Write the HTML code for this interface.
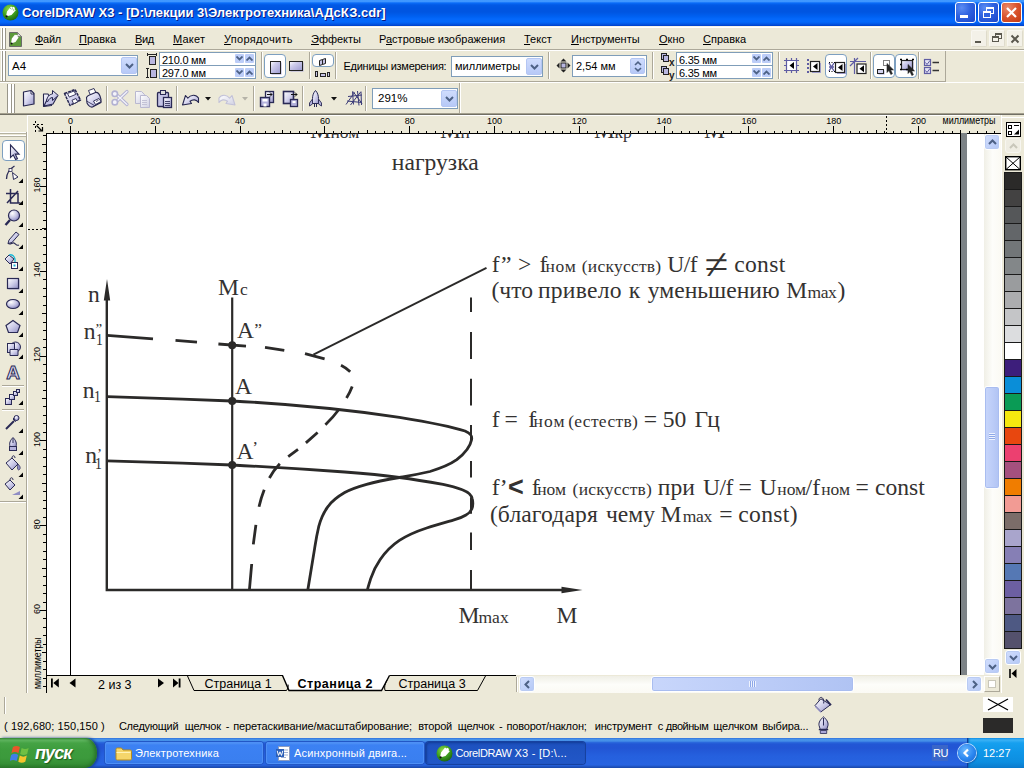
<!DOCTYPE html>
<html lang="ru">
<head>
<meta charset="utf-8">
<title>CorelDRAW X3 - [D:\лекции 3\Электротехника\АДсКЗ.cdr]</title>
<style>
*{box-sizing:border-box;margin:0;padding:0}
html,body{width:1024px;height:768px;overflow:hidden;background:#ece9d8}
body{position:relative;font-family:"Liberation Sans","DejaVu Sans",sans-serif;font-size:11px;color:#000}
.abs{position:absolute}
.t{position:absolute;white-space:nowrap;line-height:1}
#titlebar{left:0;top:0;width:1024px;height:26px;background:linear-gradient(#4098ff 0,#3f96ff 1.500px,#0a6cf8 3px,#0259e5 5px,#0055e1 8px,#0055e1 12px,#0062f3 17px,#0468fb 19px,#0468fb 22px,#0358e6 24px,#003fc8 26px)}
#menubar{left:0;top:26px;width:1024px;height:24px;background:#ece9d8}
#propbar{left:0;top:50px;width:1024px;height:32px;background:#ece9d8}
#toolbar{left:0;top:82px;width:1024px;height:32px;background:#ece9d8}
#toolbox{left:0;top:114px;width:28px;height:579px;background:#ece9d8}
#hruler{left:28px;top:115px;width:972px;height:18px;background:#ece9d8;border-top:1px solid #fff}
#vruler{left:28px;top:133px;width:18px;height:560px;background:#ece9d8}
#canvas{left:46px;top:133px;width:938px;height:542px;background:#fff;overflow:hidden}
#vscroll{left:984px;top:133px;width:17px;height:542px;background:#f3f1e7}
#palette{left:1001px;top:114px;width:23px;height:579px;background:#ece9d8}
#pagetabs{left:46px;top:675px;width:938px;height:18px;background:#ece9d8}
#status{left:0;top:693px;width:1024px;height:45px;background:#ece9d8}
#taskbar{left:0;top:738px;width:1024px;height:30px;background:linear-gradient(#2a66d8 0,#4691e9 1px,#4590e8 3px,#2a68dc 4.500px,#2257d5 6px,#2255d4 10px,#2560de 18px,#2763e0 27px,#1d4fb8 29px,#1a47a8 30px)}

#titlebar .ttl{left:22px;top:6px;font-size:13px;font-weight:bold;color:#fff;text-shadow:1px 1px 0 #0a1883;letter-spacing:0}
.cbtn{position:absolute;top:2px;width:21px;height:21px;border:1px solid #fff;border-radius:3px;background:radial-gradient(circle at 30% 25%,#5b8cf3 0,#2e62e0 45%,#1c46c9 100%)}
.cbtn.x{background:radial-gradient(circle at 30% 25%,#ea8a6c 0,#d9532c 50%,#c23a12 100%)}
.mi{position:absolute;top:7px;font-size:11px;line-height:13px;white-space:nowrap}
.mi u{text-decoration:underline;text-underline-offset:1px}
.mdib{position:absolute;top:4px;width:16px;height:17px;background:#f3f1e8;border:1px solid #f8f7f1;border-right-color:#dedbcb;border-bottom-color:#dedbcb;border-radius:2px}
.grip{position:absolute;width:5px;background:linear-gradient(90deg,#fff 0,#fff 1px,#99968a 1px,#99968a 2px,#fff 2px,#fff 4px,#99968a 4px,#99968a 5px)}

.sep{position:absolute;width:2px;border-left:1px solid #aca899;border-right:1px solid #fff}
.fld{position:absolute;background:#fff;border:1px solid #7f9db9}
.fld .tx{position:absolute;left:3px;font-size:11px;line-height:13px;white-space:nowrap}
.dd{position:absolute;background:linear-gradient(#cfdcfd,#b7c9f7);border:1px solid #b4c6f3;border-radius:2px}
.sp{position:absolute;width:9px;height:9px;background:#bccdf8;border-radius:1px}
.pressed{position:absolute;background:#fff;border:1px solid #7d9fc0;border-radius:4px}

.dt{position:absolute;white-space:nowrap;line-height:1;font-family:"Liberation Serif","DejaVu Serif",serif;color:#343231}

.sbtn{position:absolute;background:linear-gradient(135deg,#d2defd,#b4c8f6);border:1px solid #fff;border-radius:3px;box-shadow:inset 0 0 0 1px #b9cbf3}
.thumb{position:absolute;background:linear-gradient(90deg,#c8d6fb,#bacbf7 60%,#b0c3f3);border:1px solid #fff;border-radius:3px;box-shadow:inset 0 0 0 1px #a9bdf0}

#taskbar .tbn{position:absolute;top:4px;height:22px;border-radius:3px;background:linear-gradient(#5a9af5 0,#3c81f3 3px,#3a7ff0 18px,#2f6fe0 24px);box-shadow:inset 0 0 0 1px #4d8ff6,0 0 0 1px #2257c6;color:#fff;font-size:11px}
#taskbar .tbn.act{background:linear-gradient(#1a4db8 0,#1e52c0 4px,#2258c8 24px);box-shadow:inset 1px 1px 2px #143d9a,0 0 0 1px #16419f}
#taskbar .tbn .t{top:6px;color:#fff}
</style>
</head>
<body>
<div id="titlebar" class="abs">
<svg class="abs" style="left:2px;top:4px" width="17" height="17" viewBox="0 0 17 17"><defs><radialGradient id="cg" cx="40%" cy="30%" r="70%"><stop offset="0" stop-color="#8fdc4a"/><stop offset="0.6" stop-color="#3e9e1e"/><stop offset="1" stop-color="#1f6a10"/></radialGradient></defs><circle cx="8.5" cy="8.5" r="8" fill="url(#cg)"/><path d="M4 12.5 L5 7.5 L9 2.5 L10.5 3.5 L11.5 2.8 L13 4 L12.5 5.2 L13.8 6.2 L9.5 11 Z" fill="#fff"/><path d="M8.3 4.3l1 .8M10.3 4.6l1 .9M11.3 6l1 .8" stroke="#3e9e1e" stroke-width=".8"/><circle cx="4.6" cy="12.3" r="1.1" fill="#111"/></svg>
<div class="t ttl" id="ttl">CorelDRAW X3 - [D:\лекции 3\Электротехника\АДсКЗ.cdr]</div>
<div class="cbtn" style="left:955px"><div class="abs" style="left:4px;top:12px;width:8px;height:3px;background:#fff"></div></div>
<div class="cbtn" style="left:978px"><div class="abs" style="left:7px;top:4px;width:8px;height:7px;border:1px solid #fff;border-top-width:2px"></div><div class="abs" style="left:4px;top:8px;width:8px;height:7px;border:1px solid #fff;border-top-width:2px;background:#2e62e0"></div></div>
<div class="cbtn x" style="left:1001px"><svg class="abs" style="left:3px;top:3px" width="13" height="13" viewBox="0 0 13 13"><path d="M2 2L11 11M11 2L2 11" stroke="#fff" stroke-width="2.2"/></svg></div>
</div>
<div id="menubar" class="abs">
<div class="grip" style="left:1px;top:2px;height:21px"></div>
<svg class="abs" style="left:9px;top:4px" width="13" height="17" viewBox="0 0 13 17"><path d="M.5 2.5h8l4 4v10h-12z" fill="#5d9a3a" stroke="#6b6b6b"/><path d="M8.5 2.5v4h4z" fill="#d8d8d8" stroke="#6b6b6b" stroke-width=".6"/><path d="M2 13.5l.8-5L6 4.5l1 .8.9-.6 1 .9-.3 1 1 .8L6.5 12z" fill="#fff"/><circle cx="2.6" cy="13.6" r="1" fill="#111"/></svg>
<div class="mi" id="mi0" style="left:35px;letter-spacing:-.3px"><u>Ф</u>айл</div>
<div class="mi" id="mi1" style="left:79px"><u>П</u>равка</div>
<div class="mi" id="mi2" style="left:135px;letter-spacing:-.4px"><u>В</u>ид</div>
<div class="mi" id="mi3" style="left:173px;letter-spacing:.2px"><u>М</u>акет</div>
<div class="mi" id="mi4" style="left:224px;letter-spacing:.3px"><u>У</u>порядочить</div>
<div class="mi" id="mi5" style="left:311px"><u>Э</u>ффекты</div>
<div class="mi" id="mi6" style="left:379px">Р<u>а</u>стровые изображения</div>
<div class="mi" id="mi7" style="left:524px"><u>Т</u>екст</div>
<div class="mi" id="mi8" style="left:571px"><u>И</u>нструменты</div>
<div class="mi" id="mi9" style="left:659px"><u>О</u>кно</div>
<div class="mi" id="mi10" style="left:703px"><u>С</u>правка</div>
<div class="mdib" style="left:971px"><div class="abs" style="left:3px;top:10px;width:6px;height:2px;background:#5a584e"></div></div>
<div class="mdib" style="left:989px"><div class="abs" style="left:5px;top:2px;width:7px;height:6px;border:1px solid #5a584e;border-top-width:2px"></div><div class="abs" style="left:2px;top:5px;width:7px;height:6px;border:1px solid #5a584e;border-top-width:2px;background:#f3f1e8"></div></div>
<div class="mdib" style="left:1007px"><svg class="abs" style="left:2px;top:3px" width="10" height="10" viewBox="0 0 10 10"><path d="M1.5 1.5L8.5 8.5M8.5 1.5L1.5 8.5" stroke="#5a584e" stroke-width="2"/></svg></div>
<div class="abs" style="left:0;top:0;width:1024px;height:1px;background:#f4f3ea"></div><div class="abs" style="left:0;top:1px;width:1024px;height:1px;background:#fff"></div><div class="abs" style="left:0;top:23px;width:1024px;height:1px;background:#aca899"></div>
</div>
<div id="propbar" class="abs">
<div class="grip" style="left:1px;top:1px;height:30px"></div>
<div class="fld" style="left:8px;top:5px;width:130px;height:21px"><div class="tx" style="top:4px;font-size:11.500px">A4</div><div class="dd" style="left:112px;top:1px;width:16px;height:17px"><svg class="abs" style="left:3px;top:5px" width="9" height="6" viewBox="0 0 9 6"><path d="M1 1L4.5 4.5L8 1" fill="none" stroke="#4d6185" stroke-width="2"/></svg></div></div>
<svg class="abs" style="left:145px;top:2px" width="14" height="28" viewBox="0 0 14 28"><path d="M2.5 1v3M11.5 1v3M2.5 2.5h9" stroke="#222" fill="none"/><rect x="4.5" y="4.5" width="6" height="8" fill="#b9b7e0" stroke="#222"/><path d="M2.5 16v10M1 16.5h3M1 25.500h3" stroke="#222" fill="none"/><rect x="5.500" y="17.500" width="6" height="8" fill="#b9b7e0" stroke="#222"/></svg>
<div class="fld" style="left:159px;top:2px;width:97px;height:14px"><div class="tx" style="top:1px;left:2px;letter-spacing:-.25px">210.0 мм</div><div class="sp" style="left:75px;top:1px"><svg class="abs" style="left:1px;top:2px" width="7" height="5" viewBox="0 0 7 5"><path d="M.5 .5L3.5 3.5L6.5 .5" fill="none" stroke="#4d6185" stroke-width="1.8"/></svg></div><div class="sp" style="left:85px;top:1px"><svg class="abs" style="left:1px;top:2px" width="7" height="5" viewBox="0 0 7 5"><path d="M.5 4.5L3.5 1.5L6.5 4.5" fill="none" stroke="#4d6185" stroke-width="1.8"/></svg></div></div>
<div class="fld" style="left:159px;top:15px;width:97px;height:14px"><div class="tx" style="top:1px;left:2px;letter-spacing:-.25px">297.0 мм</div><div class="sp" style="left:75px;top:2px"><svg class="abs" style="left:1px;top:2px" width="7" height="5" viewBox="0 0 7 5"><path d="M.5 .5L3.5 3.5L6.5 .5" fill="none" stroke="#4d6185" stroke-width="1.8"/></svg></div><div class="sp" style="left:85px;top:2px"><svg class="abs" style="left:1px;top:2px" width="7" height="5" viewBox="0 0 7 5"><path d="M.5 4.5L3.5 1.5L6.5 4.5" fill="none" stroke="#4d6185" stroke-width="1.8"/></svg></div></div>
<div class="sep" style="left:261px;top:2px;height:27px"></div>
<div class="pressed" style="left:264px;top:4px;width:22px;height:24px"></div>
<svg class="abs" style="left:269px;top:8px" width="36" height="17" viewBox="0 0 36 17"><defs><linearGradient id="lg1" x1="0" y1="0" x2="1" y2="1"><stop offset="0" stop-color="#fff"/><stop offset=".35" stop-color="#cfcdec"/><stop offset="1" stop-color="#9c9ad0"/></linearGradient></defs><rect x="2.5" y="4.500" width="10" height="12" fill="#aba9d9"/><rect x="1.500" y="3.500" width="10" height="12" fill="url(#lg1)" stroke="#222"/><rect x="21.5" y="4.500" width="13" height="9" fill="#aba9d9"/><rect x="20.500" y="3.500" width="13" height="9" fill="url(#lg1)" stroke="#222"/></svg>
<div class="sep" style="left:309px;top:2px;height:27px"></div>
<div class="pressed" style="left:312px;top:4px;width:22px;height:13px"></div>
<svg class="abs" style="left:314px;top:6px" width="18" height="22" viewBox="0 0 18 22"><g fill="#c6c4e6" stroke="#222"><path d="M5.500 4.500l3-1v5l-3 1z"/><path d="M8.500 3.500l3-1v5l-3 1z"/></g><g fill="#c6c4e6" stroke="#222"><rect x="1.500" y="15.500" width="2" height="5"/><rect x="6.500" y="17.500" width="5" height="3"/><rect x="13.500" y="16.500" width="2" height="4"/></g></svg>
<div class="sep" style="left:335px;top:2px;height:27px"></div>
<div class="t" id="units" style="left:343.500px;top:10px;font-size:11px;line-height:13px;letter-spacing:-.27px">Единицы измерения:</div>
<div class="fld" style="left:451px;top:6px;width:92px;height:21px"><div class="tx" style="top:3px">миллиметры</div><div class="dd" style="left:74px;top:1px;width:16px;height:17px"><svg class="abs" style="left:3px;top:5px" width="9" height="6" viewBox="0 0 9 6"><path d="M1 1L4.5 4.5L8 1" fill="none" stroke="#4d6185" stroke-width="2"/></svg></div></div>
<div class="sep" style="left:548px;top:2px;height:27px"></div>
<svg class="abs" style="left:556px;top:8px" width="15" height="15" viewBox="0 0 15 15"><path d="M7.500 .5l3 3h-6zM7.500 14.500l3-3h-6zM.5 7.500l3-3v6zM14.500 7.500l-3-3v6z" fill="#222"/><rect x="5" y="5" width="5" height="5" fill="#b9b7e0" stroke="#222"/></svg>
<div class="fld" style="left:572px;top:5px;width:75px;height:22px"><div class="tx" style="top:4px">2,54 мм</div><div class="dd" style="left:57px;top:2px;width:15px;height:16px"><svg class="abs" style="left:3px;top:2px" width="8" height="11" viewBox="0 0 8 11"><path d="M1 4L4 1.200L7 4M1 7L4 9.800L7 7" fill="none" stroke="#4d6185" stroke-width="1.6"/></svg></div></div>
<div class="sep" style="left:652px;top:2px;height:27px"></div>
<svg class="abs" style="left:660px;top:2px" width="16" height="28" viewBox="0 0 16 28"><g fill="#b9b7e0" stroke="#222"><rect x="1.500" y="1.500" width="5" height="6"/><rect x="3.500" y="3.500" width="5" height="6"/><rect x="1.500" y="14.500" width="5" height="6"/><rect x="3.500" y="16.500" width="5" height="6"/></g></svg>
<div class="t" style="left:669px;top:8px;font-size:10px;font-weight:bold;color:#222">x</div><div class="t" style="left:669px;top:21px;font-size:10px;font-weight:bold;color:#222">y</div>
<div class="fld" style="left:676px;top:2px;width:97px;height:14px"><div class="tx" style="top:1px;left:2px;letter-spacing:-.25px">6.35 мм</div><div class="sp" style="left:75px;top:1px"><svg class="abs" style="left:1px;top:2px" width="7" height="5" viewBox="0 0 7 5"><path d="M.5 .5L3.5 3.5L6.5 .5" fill="none" stroke="#4d6185" stroke-width="1.8"/></svg></div><div class="sp" style="left:85px;top:1px"><svg class="abs" style="left:1px;top:2px" width="7" height="5" viewBox="0 0 7 5"><path d="M.5 4.5L3.5 1.5L6.5 4.5" fill="none" stroke="#4d6185" stroke-width="1.8"/></svg></div></div>
<div class="fld" style="left:676px;top:15px;width:97px;height:14px"><div class="tx" style="top:1px;left:2px;letter-spacing:-.25px">6.35 мм</div><div class="sp" style="left:75px;top:2px"><svg class="abs" style="left:1px;top:2px" width="7" height="5" viewBox="0 0 7 5"><path d="M.5 .5L3.5 3.5L6.5 .5" fill="none" stroke="#4d6185" stroke-width="1.8"/></svg></div><div class="sp" style="left:85px;top:2px"><svg class="abs" style="left:1px;top:2px" width="7" height="5" viewBox="0 0 7 5"><path d="M.5 4.5L3.5 1.5L6.5 4.5" fill="none" stroke="#4d6185" stroke-width="1.8"/></svg></div></div>
<div class="sep" style="left:778px;top:2px;height:27px"></div>
<div class="pressed" style="left:825px;top:4px;width:22px;height:24px"></div><div class="pressed" style="left:873px;top:4px;width:22px;height:24px"></div><div class="pressed" style="left:895px;top:4px;width:22px;height:24px"></div>
<svg class="abs" style="left:780px;top:0" width="165" height="32" viewBox="780 50 165 32"><rect x="787" y="60" width="10" height="11" fill="#fff"/><path d="M786.500 58v15M791.500 58v3M796.500 58v15M791.500 70v3M784 60.500h15M784 65.500h3M796 65.500h3M784 70.500h15" stroke="#5f5da3" stroke-width="1.200" fill="none"/><path d="M794.0 62.0v7l-4.500-3.500z" fill="#000"/><path d="M808 59v15" stroke="#5f5da3" stroke-width="2" stroke-dasharray="2 2"/><rect x="812" y="63" width="9" height="10" fill="#a9a7d8"/><rect x="810.500" y="61.500" width="9" height="10" fill="#fff" stroke="#222" stroke-width="1.200"/><path d="M817.5 63.0v7l-4.500-3.500z" fill="#000"/><path d="M829 63l5 8M834 63l-5 8M829 67h5" stroke="#5f5da3" stroke-width="1.400"/><path d="M829 62.500h6M829 71.500h6" stroke="#000" stroke-dasharray="1 1.500"/><rect x="837" y="64" width="9" height="10" fill="#a9a7d8"/><rect x="835.500" y="62.500" width="9" height="10" fill="#fff" stroke="#222" stroke-width="1.200"/><path d="M842.5 64.0v7l-4.500-3.500z" fill="#000"/><path d="M854.500 58v16M850 61.500h16M850 66l8-8" stroke="#5f5da3" stroke-width="1.200" fill="none"/><rect x="857" y="64" width="9" height="9.500" fill="#fff" stroke="#222" stroke-width="1.200"/><path d="M864.0 65.2v7l-4.500-3.500z" fill="#000"/><rect x="883.500" y="60.500" width="6" height="5" fill="none" stroke="#000" stroke-dasharray="1 1"/><rect x="878.500" y="70.500" width="6" height="4" fill="#a9a7d8"/><rect x="877.500" y="69.500" width="6" height="4" fill="#d4d3ee" stroke="#222"/><path d="M887 63.500v9l2-2 1.800 4 1.600-.8-1.800-3.800h2.900z" fill="#222" stroke="#222" stroke-width=".6"/><rect x="902.500" y="61.500" width="11" height="9" fill="#a9a7d8"/><rect x="901.500" y="60.500" width="11" height="9" fill="url(#lg1)" stroke="#222" stroke-width="1.200"/><path d="M900 59.500h2M906 59.500h2M912 59.500h2M900 64.500h1.500M900 69.500h2M906 69.500h2" stroke="#000" stroke-width="1.500"/><path d="M908 64.500v9l2-2 1.800 4 1.600-.8-1.800-3.800h2.900z" fill="#222" stroke="#222" stroke-width=".6"/><g fill="#e4e3f4" stroke="#5f5da3" stroke-width="1.200"><rect x="924.500" y="59.500" width="6" height="6"/><rect x="924.500" y="67.500" width="6" height="6"/></g><path d="M925.500 62.500l1.500 2 3-4M925.500 70.500l1.500 2 3-4" stroke="#5f5da3" fill="none"/><path d="M932.500 62.500h6.500M932.500 70.500h6.500" stroke="#333" stroke-width="1.600"/></svg>
<div class="sep" style="left:870px;top:2px;height:27px"></div><div class="sep" style="left:918px;top:2px;height:27px"></div>
<div class="abs" style="left:945px;top:1px;width:1px;height:31px;background:#aca899"></div>
<div class="abs" style="left:0;top:0;width:1024px;height:1px;background:#fff"></div><div class="abs" style="left:0;top:31px;width:946px;height:1px;background:#aca899"></div>
</div>
<div id="toolbar" class="abs">
<div class="abs" style="left:0;top:0;width:1024px;height:1px;background:#fff"></div>
<div class="abs" style="left:7px;top:2px;width:8px;height:29px;background:linear-gradient(90deg,#99968a 0,#99968a 1px,#fff 1px,#fff 4px,#99968a 4px,#99968a 5px,#fff 5px,#fff 7px,#99968a 7px,#99968a 8px)"></div>
<svg class="abs" style="left:0;top:0" width="470" height="32" viewBox="0 0 470 32"><defs><linearGradient id="ig" x1="0" y1="0" x2="1" y2="1"><stop offset="0" stop-color="#fff"/><stop offset=".5" stop-color="#d6d5ee"/><stop offset="1" stop-color="#9694c8"/></linearGradient><linearGradient id="igd" x1="0" y1="0" x2="1" y2="1"><stop offset="0" stop-color="#fff"/><stop offset="1" stop-color="#cfcfe2"/></linearGradient></defs>
<path d="M23.500 10l7.500-1.500 3 3v10.500l-10.500 2z" fill="url(#ig)" stroke="#26264f" stroke-width="1.200" stroke-linejoin="round"/><path d="M31 8.500v3.500h3z" fill="#fff" stroke="#26264f" stroke-width=".9" stroke-linejoin="round"/>
<path d="M43.500 12h4.500l1 2h3.500l-1 9.500-8 1z" fill="url(#ig)" stroke="#26264f" stroke-width="1.100" stroke-linejoin="round"/><path d="M44 24l4-8.500 9.500-1.500-4.500 8z" fill="#c3c2e6" stroke="#26264f" stroke-width="1.100" stroke-linejoin="round"/><path d="M46.500 19.500c.5-4.500 2.500-7 6-7.500v-3.500l5.800 5-5.800 5v-3c-2 .2-3.800 1.500-4.700 4z" fill="url(#ig)" stroke="#26264f" stroke-width="1" stroke-linejoin="round"/>
<path d="M64.500 11.500l10.500-4 5.500 10.500-10.500 5.500z" fill="url(#ig)" stroke="#26264f" stroke-width="1.500" stroke-linejoin="round" stroke-dasharray="3 .8"/><path d="M67.500 11.500l6.500-2.500 1.800 3.400-6.500 2.700z" fill="#fff" stroke="#26264f" stroke-width=".9"/><path d="M72 18.300l4-1.800 1.700 3.300-4 2z" fill="#fff" stroke="#26264f" stroke-width=".9"/>
<path d="M88.500 8.500l5.500-2 2.500 5.500-5.500 2.500z" fill="#fff" stroke="#26264f" stroke-width=".9" stroke-linejoin="round"/><path d="M86.500 15.500c.5-1.500 1.500-2 3-2.500l6-2.500c2-.5 3.500 1 4.500 3.500l1 3.500v3l-8.500 4.500c-2 .5-4.500-1.500-5.500-4z" fill="url(#ig)" stroke="#26264f" stroke-width="1.100" stroke-linejoin="round"/><path d="M86.500 19l8 4.500 6.500-3.500" fill="none" stroke="#26264f" stroke-width=".8"/><path d="M93.500 19l5.500-2.500 2 3-5.500 3z" fill="#fff" stroke="#26264f" stroke-width=".9" stroke-linejoin="round"/><path d="M96 19.500l2.500-1.200" stroke="#26264f" stroke-width=".8"/>
<g fill="none" stroke-linecap="round"><path d="M127 9.500l-9.500 9M127 22.500l-9.500-9" stroke="#b3b2d2" stroke-width="3.200"/><path d="M127 9.500l-9.500 9M127 22.500l-9.500-9" stroke="#f4f4fb" stroke-width="1.200"/><circle cx="114.800" cy="11.800" r="2.700" fill="#f4f4fb" stroke="#b3b2d2" stroke-width="1.600"/><circle cx="114.800" cy="20.200" r="2.700" fill="#f4f4fb" stroke="#b3b2d2" stroke-width="1.600"/></g>
<g fill="url(#igd)" stroke="#b9b8d0"><path d="M135.500 9.500h6l3 3v9h-9z"/><path d="M140.500 13.500h6l3 3v9h-9z"/></g><path d="M142 18.500h5M142 20.500h5M142 22.500h5" stroke="#c3c2d6"/>
<rect x="157.500" y="10.500" width="11" height="14" rx="1" fill="#c5c4e6" stroke="#2a2a55" stroke-width="1.300"/><rect x="160.500" y="8.500" width="5" height="4" fill="#ddd" stroke="#2a2a55"/><rect x="163.500" y="15.500" width="8" height="10" fill="url(#ig)" stroke="#2a2a55" stroke-width="1.300"/><path d="M165 19.500h5M165 21.500h5M165 23.500h5" stroke="#44446a"/>
<path d="M182.500 23L185.500 13.500L187.800 16.200C190.500 12.500 196 12 198.500 16L198.500 20.500C196.500 17.500 193 17 190 19.300L191.500 21.500Z" fill="url(#ig)" stroke="#26264f" stroke-width="1.100" stroke-linejoin="round"/><path d="M205 15h6l-3 3.500z" fill="#111"/>
<path d="M235 23L232 13.500L229.700 16.200C227 12.500 221.500 12 219 16L219 20.500C221 17.500 224.500 17 227.500 19.300L226 21.500Z" fill="url(#igd)" stroke="#c2c1d8" stroke-width="1.100" stroke-linejoin="round"/><path d="M242 15h6l-3 3.500z" fill="#b5b3a8"/>
<rect x="265.500" y="9.500" width="8" height="11" fill="url(#ig)" stroke="#2a2a55" stroke-width="1.300"/><path d="M267 12.500h5l-2-2M272 12.500l-2 2" stroke="#111" fill="none"/><rect x="260.500" y="15.500" width="9" height="9" fill="#b4b2dc" stroke="#2a2a55" stroke-width="1.400"/><rect x="262.500" y="17" width="5" height="2.500" fill="#fff"/><rect x="263.500" y="21.500" width="3" height="3" fill="#fff"/>
<rect x="283.500" y="9.500" width="10" height="12" fill="url(#ig)" stroke="#2a2a55" stroke-width="1.600"/><path d="M291 12.500h6l-2-2M297 12.500l-2 2" stroke="#111" fill="none"/><rect x="290.500" y="17.500" width="7" height="7" fill="#b4b2dc" stroke="#2a2a55" stroke-width="1.300"/><rect x="292.500" y="19" width="3" height="2" fill="#fff"/>
<path d="M315.500 8.500c2 2 3 5 3 8v5h-6v-5c0-3 1-6 3-8z" fill="url(#ig)" stroke="#2a2a55"/><path d="M312.500 17l-3 4v3l3-2zM318.500 17l3 4v3l-3-2z" fill="#b4b2dc" stroke="#2a2a55" stroke-width=".9"/><path d="M314.500 22v3M316.500 22v3" stroke="#2a2a55"/><path d="M331 15h6l-3 3.500z" fill="#111"/>
<g stroke="#3a3a78" fill="none" stroke-width="1"><path d="M346 22.500l8.500-12M350.500 23l10.500-13.500M352.500 9.500l1 13M357.500 9l1.500 14.500M361 10l.5 13M348 14.500l14-1.500M347 19l15 1.500M353 9.500l9 12"/></g>
</svg>
<div class="sep" style="left:106px;top:4px;height:25px"></div>
<div class="sep" style="left:176px;top:4px;height:25px"></div>
<div class="sep" style="left:253px;top:4px;height:25px"></div>
<div class="sep" style="left:302px;top:4px;height:25px"></div>
<div class="sep" style="left:365px;top:4px;height:25px"></div>
<div class="fld" style="left:372px;top:6px;width:86px;height:21px"><div class="tx" style="left:5px;top:3px;font-size:11.500px">291%</div><div class="dd" style="left:68px;top:1px;width:16px;height:17px"><svg class="abs" style="left:3px;top:5px" width="9" height="6" viewBox="0 0 9 6"><path d="M1 1L4.5 4.5L8 1" fill="none" stroke="#4d6185" stroke-width="2"/></svg></div></div>
<div class="abs" style="left:459px;top:1px;width:1px;height:30px;background:#aca899"></div><div class="abs" style="left:460px;top:1px;width:1px;height:30px;background:#fff"></div>
<div class="abs" style="left:0;top:31px;width:1024px;height:1px;background:#a39f8e"></div><div class="abs" style="left:0;top:32px;width:1024px;height:1px;background:#716f64;z-index:3"></div>
</div>
<div id="toolbox" class="abs">
<div class="abs" style="left:0;top:18px;width:26px;height:1px;background:#fff"></div><div class="abs" style="left:0;top:19px;width:26px;height:1px;background:#b5b2a1"></div><div class="abs" style="left:0;top:21px;width:26px;height:1px;background:#fff"></div><div class="abs" style="left:0;top:22px;width:26px;height:1px;background:#b5b2a1"></div>
<div class="abs" style="left:26px;top:18px;width:1px;height:561px;background:#aca899"></div><div class="abs" style="left:27px;top:0;width:1px;height:579px;background:#fff"></div>
<div class="pressed" style="left:2px;top:26px;width:23px;height:21px"></div>
<svg class="abs" style="left:0;top:0" width="28" height="579" viewBox="0 114 28 579"><defs><linearGradient id="tg" x1="0" y1="0" x2="1" y2="1"><stop offset="0" stop-color="#fff"/><stop offset=".5" stop-color="#cfceea"/><stop offset="1" stop-color="#8f8dc4"/></linearGradient><radialGradient id="tr" cx="35%" cy="30%" r="70%"><stop offset="0" stop-color="#fff"/><stop offset=".6" stop-color="#c5c4e4"/><stop offset="1" stop-color="#8f8dc4"/></radialGradient></defs>
<path d="M10.500 145v12.500l2.800-2.600 2.300 4.700 1.900-.9-2.300-4.600h3.900z" fill="url(#tg)" stroke="#2a2a55" stroke-width="1.100"/>
<path d="M6.500 179c0-6 3-10 8-13" fill="none" stroke="#2a2a55" stroke-width="1.300"/><path d="M12.500 172.500l1 7 4.500-2.500z" fill="#fff" stroke="#2a2a55"/><rect x="9" y="168.500" width="3" height="3" fill="#fff" stroke="#2a2a55" stroke-width=".8"/><path d="M23 183 v-4.500 l-4.500 4.500z" fill="#000"/>
<path d="M10.500 189v14h10M6 193.500h12v10M7 203l11-12" fill="none" stroke="#2a2a55" stroke-width="1.500"/><path d="M23 205 v-4.500 l-4.500 4.500z" fill="#000"/>
<circle cx="14" cy="215.500" r="5.500" fill="url(#tr)" stroke="#2a2a55" stroke-width="1.200"/><path d="M10 220l-4.500 5" stroke="#2a2a55" stroke-width="2.400"/><path d="M23 227 v-4.500 l-4.500 4.500z" fill="#000"/>
<path d="M9 240l7-8 3 2.500-7 8-4 1z" fill="url(#tg)" stroke="#2a2a55"/><path d="M8 243c2 3 4-1 6 0s2 3 5 2" fill="none" stroke="#2a2a55" stroke-width="1.100"/><path d="M23 249 v-4.500 l-4.500 4.500z" fill="#000"/>
<path d="M5 259l4-4 5 4-4 5z" fill="url(#tg)" stroke="#2a2a55"/><path d="M9 255c3-1 5 1 6 4v4" fill="none" stroke="#19b8d8" stroke-width="1.300"/><rect x="11.500" y="262.500" width="6" height="6" fill="#fff" stroke="#2a2a55"/><rect x="13.500" y="264.500" width="2" height="2" fill="#19b8d8"/><path d="M23 271 v-4.500 l-4.500 4.500z" fill="#000"/>
<rect x="8.500" y="279.500" width="11" height="10" fill="#a8a6d6"/><rect x="7.500" y="278.500" width="11" height="10" fill="url(#tg)" stroke="#2a2a55" stroke-width="1.200"/><path d="M23 293 v-4.500 l-4.500 4.500z" fill="#000"/>
<ellipse cx="13" cy="304" rx="6.500" ry="4.500" fill="url(#tr)" stroke="#2a2a55" stroke-width="1.200"/><path d="M23 315 v-4.500 l-4.500 4.500z" fill="#000"/>
<path d="M13 320.500l7 5-2.500 7h-9l-2.500-7z" fill="url(#tg)" stroke="#2a2a55" stroke-width="1.200"/><path d="M23 337 v-4.500 l-4.500 4.500z" fill="#000"/>
<circle cx="15.500" cy="347" r="5" fill="url(#tr)" stroke="#2a2a55"/><rect x="7.500" y="343.500" width="7" height="9" fill="url(#tg)" stroke="#2a2a55"/><path d="M10 349.500h8v6h-8z" fill="url(#tg)" stroke="#2a2a55"/><path d="M23 359 v-4.500 l-4.500 4.500z" fill="#000"/>
<text x="13" y="379" text-anchor="middle" font-family="Liberation Sans, sans-serif" font-weight="bold" font-size="19" fill="#dcdbf1" stroke="#2a2a55" stroke-width="1">A</text>
<path d="M2 385.500h22" stroke="#aca899"/><path d="M2 386.500h22" stroke="#fff"/>
<g fill="url(#tg)" stroke="#2a2a55"><rect x="5.500" y="398.500" width="6" height="6"/><rect x="9.500" y="394.500" width="5" height="5"/><rect x="13.500" y="391.500" width="4" height="4"/><rect x="16.500" y="389.500" width="3" height="3"/></g><path d="M23 405 v-4.500 l-4.500 4.500z" fill="#000"/>
<path d="M2 409.500h22" stroke="#aca899"/><path d="M2 410.500h22" stroke="#fff"/>
<path d="M6 429l8-8" stroke="#2a2a55" stroke-width="2"/><path d="M13 419l3-3 2.500 2.500-3 3z" fill="url(#tg)" stroke="#2a2a55"/><circle cx="16.500" cy="418" r="2.500" fill="url(#tr)" stroke="#2a2a55"/><path d="M23 433 v-4.500 l-4.500 4.500z" fill="#000"/>
<path d="M13 437.500c-3 3-4 6-3 9h6c1-3 0-6-3-9z" fill="url(#tg)" stroke="#2a2a55"/><path d="M13 438v5" stroke="#2a2a55"/><rect x="9.500" y="446.500" width="7" height="4" fill="#b4b2dc" stroke="#2a2a55"/><path d="M23 455 v-4.500 l-4.500 4.500z" fill="#000"/>
<path d="M6 463l6-5 6 6-6 6z" fill="url(#tg)" stroke="#2a2a55"/><path d="M12 458c0-3 3-3 3 0" fill="none" stroke="#2a2a55"/><path d="M18 464c2 2 3 4 1.500 5.500s-3-1-1.500-5.500z" fill="#8f8dc4" stroke="#2a2a55" stroke-width=".7"/><path d="M23 477 v-4.500 l-4.500 4.500z" fill="#000"/>
<path d="M5 484l5-4 5 5-5 5z" fill="url(#tg)" stroke="#2a2a55"/><path d="M10 480c0-3 3-3 3 0" fill="none" stroke="#2a2a55"/><path d="M12 495l8-4v4z" fill="#8f8dc4"/><path d="M23 499 v-4.500 l-4.500 4.500z" fill="#000"/>
</svg>
<div class="abs" style="left:0;top:387px;width:26px;height:1px;background:#aca899"></div><div class="abs" style="left:0;top:388px;width:26px;height:1px;background:#fff"></div>
</div>
<div id="hruler" class="abs"><svg class="abs" style="left:0;top:0" width="972" height="18" viewBox="0 0 972 18" font-family="Liberation Sans, sans-serif" font-size="9">
<path d="M25.5 18v-3M34.5 18v-3M42.5 18v-8M50.5 18v-3M59.5 18v-3M67.5 18v-3M76.5 18v-3M84.5 18v-4M93.5 18v-3M101.5 18v-3M110.5 18v-3M118.5 18v-3M127.5 18v-8M135.5 18v-3M144.5 18v-3M152.5 18v-3M161.5 18v-3M169.5 18v-4M178.5 18v-3M186.5 18v-3M195.5 18v-3M203.5 18v-3M212.5 18v-8M220.5 18v-3M229.5 18v-3M237.5 18v-3M246.5 18v-3M254.5 18v-4M262.5 18v-3M271.5 18v-3M279.5 18v-3M288.5 18v-3M296.5 18v-8M305.5 18v-3M313.5 18v-3M322.5 18v-3M330.5 18v-3M339.5 18v-4M347.5 18v-3M356.5 18v-3M364.5 18v-3M373.5 18v-3M381.5 18v-8M390.5 18v-3M398.5 18v-3M407.5 18v-3M415.5 18v-3M424.5 18v-4M432.5 18v-3M441.5 18v-3M449.5 18v-3M458.5 18v-3M466.5 18v-8M474.5 18v-3M483.5 18v-3M491.5 18v-3M500.5 18v-3M508.5 18v-4M517.5 18v-3M525.5 18v-3M534.5 18v-3M542.5 18v-3M551.5 18v-8M559.5 18v-3M568.5 18v-3M576.5 18v-3M585.5 18v-3M593.5 18v-4M602.5 18v-3M610.5 18v-3M619.5 18v-3M627.5 18v-3M636.5 18v-8M644.5 18v-3M653.5 18v-3M661.5 18v-3M670.5 18v-3M678.5 18v-4M686.5 18v-3M695.5 18v-3M703.5 18v-3M712.5 18v-3M720.5 18v-8M729.5 18v-3M737.5 18v-3M746.5 18v-3M754.5 18v-3M763.5 18v-4M771.5 18v-3M780.5 18v-3M788.5 18v-3M797.5 18v-3M805.5 18v-8M814.5 18v-3M822.5 18v-3M831.5 18v-3M839.5 18v-3M848.5 18v-4M856.5 18v-3M865.5 18v-3M873.5 18v-3M882.5 18v-3M890.5 18v-8M898.5 18v-3M907.5 18v-3M915.5 18v-3M924.5 18v-3M932.5 18v-4M941.5 18v-3M949.5 18v-3M958.5 18v-3M966.5 18v-3" stroke="#000" stroke-width="1" fill="none"/>
<text x="42.5" y="8.300" text-anchor="middle">0</text><text x="127.3" y="8.300" text-anchor="middle">20</text><text x="212.1" y="8.300" text-anchor="middle">40</text><text x="296.9" y="8.300" text-anchor="middle">60</text><text x="381.7" y="8.300" text-anchor="middle">80</text><text x="466.5" y="8.300" text-anchor="middle">100</text><text x="551.3" y="8.300" text-anchor="middle">120</text><text x="636.1" y="8.300" text-anchor="middle">140</text><text x="720.9" y="8.300" text-anchor="middle">160</text><text x="805.7" y="8.300" text-anchor="middle">180</text><text x="890.5" y="8.300" text-anchor="middle">200</text>
<text x="914.500" y="8.300" font-size="10" textLength="53" lengthAdjust="spacingAndGlyphs">миллиметры</text>
<path d="M858.500 0v18" stroke="#000" stroke-dasharray="2 2"/>
<g stroke="#000" fill="none"><path d="M5 8.500h2M9 8.500h2M13 8.500h2M7.500 5v2M7.500 10v2M7.500 14v2"/><path d="M8.500 9.500l5 5M14.500 11v4h-4" stroke-width="1.200"/></g>
</svg></div>
<div id="vruler" class="abs"><svg class="abs" style="left:0;top:0" width="18" height="560" viewBox="0 0 18 560" font-family="Liberation Sans, sans-serif" font-size="9">
<path d="M18 2.5h-3M18 11.5h-4M18 19.5h-3M18 28.5h-3M18 36.5h-3M18 45.5h-3M18 53.5h-6M18 61.5h-3M18 70.5h-3M18 78.5h-3M18 87.5h-3M18 95.5h-4M18 104.5h-3M18 112.5h-3M18 121.5h-3M18 129.5h-3M18 138.5h-6M18 146.5h-3M18 155.5h-3M18 163.5h-3M18 172.5h-3M18 180.5h-4M18 189.5h-3M18 197.5h-3M18 206.5h-3M18 214.5h-3M18 223.5h-6M18 231.5h-3M18 240.5h-3M18 248.5h-3M18 257.5h-3M18 265.5h-4M18 273.5h-3M18 282.5h-3M18 290.5h-3M18 299.5h-3M18 307.5h-6M18 316.5h-3M18 324.5h-3M18 333.5h-3M18 341.5h-3M18 350.5h-4M18 358.5h-3M18 367.5h-3M18 375.5h-3M18 384.5h-3M18 392.5h-6M18 401.5h-3M18 409.5h-3M18 418.5h-3M18 426.5h-3M18 435.5h-4M18 443.5h-3M18 452.5h-3M18 460.5h-3M18 469.5h-3M18 477.5h-6M18 485.5h-3M18 494.5h-3M18 502.5h-3M18 511.5h-3M18 519.5h-4M18 528.5h-3M18 536.5h-3M18 545.5h-3M18 553.5h-3" stroke="#000" stroke-width="1" fill="none"/>
<text transform="translate(12 52.0) rotate(-90)" text-anchor="middle">160</text><text transform="translate(12 136.8) rotate(-90)" text-anchor="middle">140</text><text transform="translate(12 221.6) rotate(-90)" text-anchor="middle">120</text><text transform="translate(12 306.4) rotate(-90)" text-anchor="middle">100</text><text transform="translate(12 391.2) rotate(-90)" text-anchor="middle">80</text><text transform="translate(12 476.0) rotate(-90)" text-anchor="middle">60</text>
<text transform="translate(12.500 556) rotate(-90)" font-size="10" textLength="51.500" lengthAdjust="spacingAndGlyphs">миллиметры</text>
<path d="M0 96.500h18" stroke="#000" stroke-dasharray="2 2"/>
</svg></div>
<!--CANVAS-START--><div id="canvas" class="abs">
<div class="abs" style="left:0;top:0;width:938px;height:1px;background:#000"></div><div class="abs" style="left:0;top:0;width:1px;height:542px;background:#000"></div>
<div class="abs" style="left:24px;top:0;width:1px;height:542px;background:#000"></div>
<div class="abs" style="left:914px;top:0;width:7px;height:542px;background:#7c8286;border-left:1px solid #000"></div>
<svg class="abs" style="left:0;top:0" width="938" height="542" viewBox="46 133 938 542" fill="none" stroke="#2b2a29">
<path d="M106.800 298V590H563" stroke-width="2.400"/>
<path d="M107 279L110.200 300.500H103.800Z M582.500 590L561.500 593.200V586.800Z" fill="#2b2a29" stroke="none"/>
<path d="M232.200 297.500V590" stroke-width="2.200"/>
<path d="M471 297.500V312M471 332V359M471 378.700V405.400M471 425V441M471 461V477.400M471 497.300V513.700M471 532.500V550M471 570V590" stroke-width="2"/>
<path d="M107 396.600 C150 398 190 399.500 232 401 C290 404 340 408.500 399.400 417.300 C425 421.500 450 426 465 431 C471 433.500 472.500 436 471.500 440 C470 448 464 454 456.800 459.700 C450 464.500 440 468.500 430 471.500 C415 475 405 476.500 399.400 477.500 C385 480 375 482 366.600 484.300 C357 487 350 489.500 344.700 492.500 C337 497 332 501 328.300 506.200 C323 513 320.500 520 318.700 526.700 C316.500 536 315.500 543 314.600 548.600 L307.800 590" stroke-width="2.800"/>
<path d="M107 460.800 C150 462 190 463.500 232 465 C270 467 310 469.500 344.700 472 C365 473.500 385 475.500 399.400 477.500 C415 479.500 430 482 443.100 484.300 C452 486 458 488 462.300 489.800 C468 492 471.500 494.500 472.300 499 C473 502 473 506 471.800 509 C470.500 512 469 513.500 466 515 C462 517.500 458 518.800 454 519.900 C445 522.500 436 525 426.700 528 C416 531.500 407 535.500 399.400 540.400 C391 546 385 552.500 380.200 559.500 C375 567 372.500 573 370.700 578.700 C369 584 368 587 367.400 590" stroke-width="2.800"/>
<path d="M107 335.300L153 338.900M175.500 340.300L197 342.200M218.400 344L246 346.200M265 347.400L284.300 350.400M305 353.700L324.600 358.900M341 365.200Q346.500 368 350.200 371.700M352.200 386.600Q350 392.500 346.500 398M339.300 409Q333 417.500 325.400 424.700M317.600 432.500L305.900 442.900M298 449.400L288.200 456.700M279.800 463.800Q273.500 470.500 269.400 478M264.200 489.800Q261 498 259 506.700M255.900 524.900L253.300 544.400M251.700 564L249.400 590" stroke-width="2.800"/>
<path d="M313.400 354.600L486.500 267.800" stroke-width="1.900"/>
<circle cx="232.200" cy="345.200" r="4" fill="#2b2a29" stroke="none"/><circle cx="232.200" cy="401" r="4" fill="#2b2a29" stroke="none"/><circle cx="232.200" cy="465" r="4" fill="#2b2a29" stroke="none"/>
</svg>
<span class="dt" id="c1" style="left:264.0px;top:-14.1px;font-size:23.6px;">М</span>
<span class="dt" id="c1b" style="left:284.5px;top:-9.0px;font-size:17.5px;">ном</span>
<span class="dt" id="c2" style="left:394.0px;top:-14.1px;font-size:23.6px;">М</span>
<span class="dt" id="c2b" style="left:414.5px;top:-9.0px;font-size:17.5px;">п</span>
<span class="dt" id="c3" style="left:548.0px;top:-14.1px;font-size:23.6px;">М</span>
<span class="dt" id="c3b" style="left:568.5px;top:-9.0px;font-size:17.5px;">кр</span>
<span class="dt" id="c4" style="left:658.0px;top:-14.1px;font-size:23.6px;">М</span>
<span class="dt" id="nag" style="left:345.8px;top:18.3px;font-size:23.6px;letter-spacing:0.00px;">нагрузка</span>
<span class="dt" id="ln" style="left:41.9px;top:150.0px;font-size:23.6px;letter-spacing:0.00px;">n</span>
<span class="dt" id="lmc" style="left:172.0px;top:142.6px;font-size:23.6px;letter-spacing:0.00px;">М</span>
<span class="dt" id="lmcc" style="left:194.0px;top:147.7px;font-size:17.5px;letter-spacing:0.00px;">с</span>
<span class="dt" id="n2" style="left:37.8px;top:187.2px;font-size:23.6px;">n</span>
<span class="dt" id="n2s" style="left:49.6px;top:197.7px;font-size:17.5px;transform:scaleX(.78);transform-origin:0 0;">1</span>
<span class="dt" id="n2q" style="left:49.4px;top:189.3px;font-size:15px;">”</span>
<span class="dt" id="n1" style="left:36.7px;top:245.5px;font-size:23.6px;">n</span>
<span class="dt" id="n1s" style="left:48.0px;top:254.5px;font-size:17.5px;transform:scaleX(.78);transform-origin:0 0;">1</span>
<span class="dt" id="n3" style="left:39.3px;top:311.3px;font-size:23.6px;">n</span>
<span class="dt" id="n3s" style="left:49.3px;top:322.4px;font-size:17.5px;transform:scaleX(.78);transform-origin:0 0;">1</span>
<span class="dt" id="n3q" style="left:50.9px;top:313.9px;font-size:15px;">’</span>
<span class="dt" id="a2" style="left:191.0px;top:185.8px;font-size:23.6px;">A</span>
<span class="dt" id="a2q" style="left:208.3px;top:187.8px;font-size:17.5px;">”</span>
<span class="dt" id="a1" style="left:189.0px;top:241.5px;font-size:23.6px;">A</span>
<span class="dt" id="a3" style="left:190.5px;top:306.7px;font-size:23.6px;">A</span>
<span class="dt" id="a3q" style="left:206.3px;top:306.3px;font-size:17.5px;">’</span>
<span class="dt" id="mmax" style="left:412.6px;top:470.9px;font-size:23.6px;letter-spacing:0.00px;">М</span>
<span class="dt" id="mmaxs" style="left:432.5px;top:476.0px;font-size:17.5px;letter-spacing:0.00px;">max</span>
<span class="dt" id="mm" style="left:510.6px;top:470.9px;font-size:23.6px;letter-spacing:0.00px;">М</span>
<span class="dt" id="r1a" style="left:445.7px;top:120.0px;font-size:23.6px;">f</span>
<span class="dt" id="r1b" style="left:454.9px;top:120.0px;font-size:23.6px;letter-spacing:0.00px;">”</span>
<span class="dt" id="r1c" style="left:472.0px;top:120.0px;font-size:23.6px;letter-spacing:0.00px;">&gt;</span>
<span class="dt" id="r1d" style="left:493.6px;top:120.0px;font-size:23.6px;">f</span>
<span class="dt" id="r1e" style="left:499.6px;top:125.1px;font-size:17.5px;letter-spacing:0.65px;">ном</span>
<span class="dt" id="r1f" style="left:535.8px;top:125.1px;font-size:17.5px;letter-spacing:0.23px;">(искусств)</span>
<span class="dt" id="r1g" style="left:621.2px;top:120.0px;font-size:23.6px;letter-spacing:-0.55px;">U/f</span>
<span class="dt" id="r1h" style="left:658.6px;top:110.3px;font-size:43px;letter-spacing:0.00px;">≠</span>
<span class="dt" id="r1i" style="left:688.2px;top:120.0px;font-size:23.6px;letter-spacing:0.30px;">const</span>
<span class="dt" id="r2a" style="left:445.5px;top:145.8px;font-size:23.6px;letter-spacing:0.00px;">(что</span>
<span class="dt" id="r2a2" style="left:491.9px;top:145.8px;font-size:23.6px;letter-spacing:0.28px;">привело</span>
<span class="dt" id="r2a3" style="left:582.8px;top:145.8px;font-size:23.6px;letter-spacing:0.00px;">к</span>
<span class="dt" id="r2a4" style="left:601.8px;top:145.8px;font-size:23.6px;letter-spacing:0.00px;">уменьшению</span>
<span class="dt" id="r2b" style="left:740.3px;top:145.8px;font-size:23.6px;letter-spacing:0.00px;">М</span>
<span class="dt" id="r2c" style="left:761.6px;top:150.9px;font-size:17.5px;letter-spacing:-0.50px;">max</span>
<span class="dt" id="r2d" style="left:791.5px;top:145.8px;font-size:23.6px;letter-spacing:0.00px;">)</span>
<span class="dt" id="s1a" style="left:445.7px;top:274.9px;font-size:23.6px;">f</span>
<span class="dt" id="s1b" style="left:458.4px;top:274.9px;font-size:23.6px;letter-spacing:0.00px;">=</span>
<span class="dt" id="s1c" style="left:482.3px;top:274.9px;font-size:23.6px;">f</span>
<span class="dt" id="s1d" style="left:487.6px;top:280.0px;font-size:17.5px;letter-spacing:1.00px;">ном</span>
<span class="dt" id="s1e" style="left:522.2px;top:280.0px;font-size:17.5px;letter-spacing:0.31px;">(естеств)</span>
<span class="dt" id="s1f" style="left:597.8px;top:274.9px;font-size:23.6px;letter-spacing:0.00px;">=</span>
<span class="dt" id="s1g" style="left:616.8px;top:274.9px;font-size:23.6px;letter-spacing:0.00px;">50</span>
<span class="dt" id="s1h" style="left:648.6px;top:274.9px;font-size:23.6px;letter-spacing:-1.10px;">Гц</span>
<span class="dt" id="t1a" style="left:445.7px;top:342.8px;font-size:23.6px;">f</span>
<span class="dt" id="t1b" style="left:453.8px;top:342.8px;font-size:23.6px;letter-spacing:0.00px;">’</span>
<span class="dt" id="t1c" style="left:462.0px;top:341.0px;font-size:27px;font-family:'Liberation Sans',sans-serif;font-weight:bold;letter-spacing:0.00px;">&lt;</span>
<span class="dt" id="t1d" style="left:485.8px;top:342.8px;font-size:23.6px;">f</span>
<span class="dt" id="t1e" style="left:491.2px;top:347.9px;font-size:17.5px;letter-spacing:0.00px;">ном</span>
<span class="dt" id="t1f" style="left:526.6px;top:347.9px;font-size:17.5px;letter-spacing:0.23px;">(искусств)</span>
<span class="dt" id="t1g" style="left:611.8px;top:342.8px;font-size:23.6px;letter-spacing:0.00px;">при</span>
<span class="dt" id="t1h" style="left:657.0px;top:342.8px;font-size:23.6px;letter-spacing:-0.60px;">U/f</span>
<span class="dt" id="t1i" style="left:692.4px;top:342.8px;font-size:23.6px;letter-spacing:0.00px;">=</span>
<span class="dt" id="t1j" style="left:713.6px;top:342.8px;font-size:23.6px;letter-spacing:0.00px;">U</span>
<span class="dt" id="t1k" style="left:731.3px;top:347.9px;font-size:17.5px;letter-spacing:0.00px;">ном</span>
<span class="dt" id="t1l" style="left:759.6px;top:342.8px;font-size:23.6px;">/f</span>
<span class="dt" id="t1m" style="left:775.2px;top:347.9px;font-size:17.5px;letter-spacing:0.00px;">ном</span>
<span class="dt" id="t1n" style="left:809.6px;top:342.8px;font-size:23.6px;letter-spacing:0.00px;">=</span>
<span class="dt" id="t1o" style="left:829.0px;top:342.8px;font-size:23.6px;letter-spacing:0.00px;">const</span>
<span class="dt" id="t2a" style="left:443.9px;top:369.7px;font-size:23.6px;letter-spacing:0.11px;">(благодаря</span>
<span class="dt" id="t2a2" style="left:559.9px;top:369.7px;font-size:23.6px;letter-spacing:0.00px;">чему</span>
<span class="dt" id="t2b" style="left:614.5px;top:369.7px;font-size:23.6px;letter-spacing:0.00px;">М</span>
<span class="dt" id="t2c" style="left:636.7px;top:374.8px;font-size:17.5px;letter-spacing:-0.25px;">max</span>
<span class="dt" id="t2d" style="left:673.3px;top:369.7px;font-size:23.6px;letter-spacing:0.00px;">=</span>
<span class="dt" id="t2e" style="left:692.2px;top:369.7px;font-size:23.6px;letter-spacing:0.36px;">const)</span>
</div><!--CANVAS-END-->
<div id="vscroll" class="abs" style="background:linear-gradient(90deg,#f0efe6,#fdfdfa 50%,#fbfaf4)">
<div class="abs" style="left:0;top:0;width:17px;height:1px;background:#000"></div><div class="sbtn" style="left:0;top:1px;width:16px;height:16px"><svg class="abs" style="left:3px;top:4px" width="9" height="6" viewBox="0 0 9 6"><path d="M1 5L4.500 1.500L8 5" fill="none" stroke="#4d6185" stroke-width="2"/></svg></div>
<div class="thumb" style="left:0;top:253px;width:16px;height:103px"><div class="abs" style="left:4px;top:46px;width:6px;height:7px;background:repeating-linear-gradient(#eef3fe 0,#eef3fe 1px,#8ea8e8 1px,#8ea8e8 2px)"></div></div>
<div class="sbtn" style="left:0;top:525px;width:16px;height:16px"><svg class="abs" style="left:3px;top:5px" width="9" height="6" viewBox="0 0 9 6"><path d="M1 1L4.500 4.500L8 1" fill="none" stroke="#4d6185" stroke-width="2"/></svg></div>
</div>
<div id="palette" class="abs">
<div class="abs" style="left:0;top:0;width:1px;height:579px;background:#fff"></div><div class="abs" style="left:1px;top:3px;width:22px;height:1px;background:#fff"></div><svg class="abs" style="left:5px;top:8px" width="15" height="15" viewBox="0 0 15 15"><rect x=".5" y=".5" width="14" height="14" fill="#fff" stroke="#000"/><rect x="2.500" y="3.500" width="3" height="3" fill="none" stroke="#000"/><rect x="2.500" y="9.500" width="3" height="3" fill="none" stroke="#000"/><path d="M8 3.500h5" stroke="#000"/><path d="M8 12.500h5v-5z" fill="#000"/></svg>
<div class="abs" style="left:4px;top:24px;width:16px;height:15px;background:#efede3;border:1px solid #f7f6f0;border-radius:3px"><svg class="abs" style="left:3px;top:4px" width="9" height="6" viewBox="0 0 9 6"><path d="M1 5L4.500 1.500L8 5" fill="none" stroke="#c9c7ba" stroke-width="2"/></svg></div>
<svg class="abs" style="left:3px;top:41px" width="18" height="16" viewBox="0 0 18 16"><rect x="1.700" y="1.700" width="14.600" height="13" fill="#fff" stroke="#000" stroke-width="1.400"/><path d="M2 2L16 14.500M16 2L2 14.500" stroke="#000"/></svg>
<div class="abs" style="left:3px;top:58px;width:18px;height:17px;background:#2b2a29;border:1px solid #1a1a1a;border-bottom:0"></div><div class="abs" style="left:3px;top:75px;width:18px;height:17px;background:#434242;border:1px solid #1a1a1a;border-bottom:0"></div><div class="abs" style="left:3px;top:92px;width:18px;height:17px;background:#555759;border:1px solid #1a1a1a;border-bottom:0"></div><div class="abs" style="left:3px;top:109px;width:18px;height:17px;background:#636669;border:1px solid #1a1a1a;border-bottom:0"></div><div class="abs" style="left:3px;top:126px;width:18px;height:17px;background:#727678;border:1px solid #1a1a1a;border-bottom:0"></div><div class="abs" style="left:3px;top:143px;width:18px;height:17px;background:#838789;border:1px solid #1a1a1a;border-bottom:0"></div><div class="abs" style="left:3px;top:160px;width:18px;height:17px;background:#9a9c9e;border:1px solid #1a1a1a;border-bottom:0"></div><div class="abs" style="left:3px;top:177px;width:18px;height:17px;background:#acadaf;border:1px solid #1a1a1a;border-bottom:0"></div><div class="abs" style="left:3px;top:194px;width:18px;height:17px;background:#c4c5c7;border:1px solid #1a1a1a;border-bottom:0"></div><div class="abs" style="left:3px;top:211px;width:18px;height:17px;background:#dcdddf;border:1px solid #1a1a1a;border-bottom:0"></div><div class="abs" style="left:3px;top:228px;width:18px;height:17px;background:#ffffff;border:1px solid #1a1a1a;border-bottom:0"></div><div class="abs" style="left:3px;top:245px;width:18px;height:17px;background:#3d1e7b;border:1px solid #1a1a1a;border-bottom:0"></div><div class="abs" style="left:3px;top:262px;width:18px;height:17px;background:#0a8ed8;border:1px solid #1a1a1a;border-bottom:0"></div><div class="abs" style="left:3px;top:279px;width:18px;height:17px;background:#0a9b55;border:1px solid #1a1a1a;border-bottom:0"></div><div class="abs" style="left:3px;top:296px;width:18px;height:17px;background:#f5e80f;border:1px solid #1a1a1a;border-bottom:0"></div><div class="abs" style="left:3px;top:313px;width:18px;height:17px;background:#e8470f;border:1px solid #1a1a1a;border-bottom:0"></div><div class="abs" style="left:3px;top:330px;width:18px;height:17px;background:#ec4070;border:1px solid #1a1a1a;border-bottom:0"></div><div class="abs" style="left:3px;top:347px;width:18px;height:17px;background:#a5507e;border:1px solid #1a1a1a;border-bottom:0"></div><div class="abs" style="left:3px;top:364px;width:18px;height:17px;background:#f07d00;border:1px solid #1a1a1a;border-bottom:0"></div><div class="abs" style="left:3px;top:381px;width:18px;height:17px;background:#f29b94;border:1px solid #1a1a1a;border-bottom:0"></div><div class="abs" style="left:3px;top:398px;width:18px;height:17px;background:#7b6d69;border:1px solid #1a1a1a;border-bottom:0"></div><div class="abs" style="left:3px;top:415px;width:18px;height:17px;background:#a9a5cc;border:1px solid #1a1a1a;border-bottom:0"></div><div class="abs" style="left:3px;top:432px;width:18px;height:17px;background:#867fb5;border:1px solid #1a1a1a;border-bottom:0"></div><div class="abs" style="left:3px;top:449px;width:18px;height:17px;background:#5578b4;border:1px solid #1a1a1a;border-bottom:0"></div><div class="abs" style="left:3px;top:466px;width:18px;height:17px;background:#6c5fa2;border:1px solid #1a1a1a;border-bottom:0"></div><div class="abs" style="left:3px;top:483px;width:18px;height:17px;background:#7d739e;border:1px solid #1a1a1a;border-bottom:0"></div><div class="abs" style="left:3px;top:500px;width:18px;height:17px;background:#4e5983;border:1px solid #1a1a1a;border-bottom:0"></div><div class="abs" style="left:3px;top:517px;width:18px;height:17px;background:#54516c;border:1px solid #1a1a1a;border-bottom:0"></div>
<div class="abs" style="left:3px;top:534px;width:18px;height:1px;background:#1a1a1a"></div>
<div class="sbtn" style="left:4px;top:536px;width:16px;height:15px"><svg class="abs" style="left:3px;top:4px" width="9" height="6" viewBox="0 0 9 6"><path d="M1 1L4.500 4.500L8 1" fill="none" stroke="#4d6185" stroke-width="2"/></svg></div>
<svg class="abs" style="left:8px;top:555px" width="8" height="9" viewBox="0 0 8 9"><path d="M1 0v9" stroke="#000" stroke-width="1.600"/><path d="M7.500 0v9L2.500 4.500z" fill="#000"/></svg>
</div>
<div id="pagetabs" class="abs">
<div class="abs" style="left:0;top:0;width:1px;height:18px;background:#000"></div>
<svg class="abs" style="left:0;top:0" width="475" height="18" viewBox="46 675 475 18"><g fill="#000"><path d="M51 678.500v9h1.800v-9z"/><path d="M58.800 678.500v9l-5.500-4.500z"/><path d="M75.500 678.500v9l-6-4.500z"/><path d="M158 678.500v9l6-4.500z"/><path d="M173 678.500v9l5.500-4.500z"/><path d="M178.700 678.500v9h1.800v-9z"/></g><path d="M282.500 675h107l-8 15.500h-92.500z" fill="#fff"/><path d="M46 675.500H283M389.500 675.500H516" stroke="#000" fill="none"/><path d="M187.500 676l6.500 14.500H286.500c1.500-2 2-4 1.500-6" fill="none" stroke="#000"/><path d="M282.500 675.500l6.500 15h92.500l8-15" fill="none" stroke="#000" stroke-width="1.400"/><path d="M387 680c-2 4-3 7-2 10.500H477.500L485.500 676" fill="none" stroke="#000"/></svg>
<div class="t" id="pgn" style="left:52px;top:4px;font-size:12.500px">2 из 3</div><div class="t" id="pg1" style="left:158.500px;top:3px;font-size:12.500px">Страница 1</div><div class="t" id="pg2" style="left:251.500px;top:3px;font-size:12.500px;font-weight:bold;letter-spacing:.53px">Страница 2</div><div class="t" id="pg3" style="left:352.500px;top:3px;font-size:12.500px">Страница 3</div>
<div class="abs" style="left:470px;top:2px;width:1px;height:15px;background:#aca899"></div><div class="abs" style="left:471px;top:2px;width:1px;height:15px;background:#fff"></div><div class="abs" style="left:473px;top:1px;width:465px;height:17px;background:linear-gradient(#f0efe6,#fdfdfa 50%,#fbfaf4)"></div>
<div class="sbtn" style="left:473px;top:1px;width:16px;height:16px"><svg class="abs" style="left:4px;top:3px" width="6" height="9" viewBox="0 0 6 9"><path d="M5 1L1.500 4.500L5 8" fill="none" stroke="#4d6185" stroke-width="2"/></svg></div><div class="sbtn" style="left:920px;top:1px;width:16px;height:16px"><svg class="abs" style="left:5px;top:3px" width="6" height="9" viewBox="0 0 6 9"><path d="M1 1L4.500 4.500L1 8" fill="none" stroke="#4d6185" stroke-width="2"/></svg></div><div class="thumb" style="left:605px;top:1px;width:203px;height:16px"><div class="abs" style="left:97px;top:4px;width:7px;height:6px;background:repeating-linear-gradient(90deg,#eef3fe 0,#eef3fe 1px,#8ea8e8 1px,#8ea8e8 2px)"></div></div>
</div>
<!-- end pagetabs --><div class="abs" style="left:984px;top:675px;width:17px;height:18px;background:#ece9d8"><div class="abs" style="left:0;top:1px;width:16px;height:16px;border:1px solid #fff;border-right-color:#aca899;border-bottom-color:#aca899"><div class="abs" style="left:3px;top:3px;width:8px;height:8px;background:#fff;border:1px solid #c9c7ba"></div></div></div>
<div id="status" class="abs">
<div class="abs" style="left:4px;top:4px;width:1px;height:17px;background:#aca899"></div><div class="abs" style="left:5px;top:4px;width:1px;height:17px;background:#fff"></div>
<div class="t" id="st1" style="left:4px;top:28px;font-size:11px;letter-spacing:.09px">( 192,680; 150,150 )</div>
<div id="st2"><span class="t" style="left:118.95px;top:28px;font-size:11px;letter-spacing:-0.26px">Следующий </span><span class="t" style="left:184.70px;top:28px;font-size:11px;letter-spacing:-0.23px">щелчок </span><span class="t" style="left:225.70px;top:28px;font-size:11px;letter-spacing:0.00px">- </span><span class="t" style="left:233.20px;top:28px;font-size:11px;letter-spacing:-0.09px">перетаскивание/масштабирование; </span><span class="t" style="left:418.20px;top:28px;font-size:11px;letter-spacing:-0.19px">второй </span><span class="t" style="left:457.70px;top:28px;font-size:11px;letter-spacing:-0.19px">щелчок </span><span class="t" style="left:498.95px;top:28px;font-size:11px;letter-spacing:0.00px">- </span><span class="t" style="left:506.45px;top:28px;font-size:11px;letter-spacing:-0.18px">поворот/наклон; </span><span class="t" style="left:594.70px;top:28px;font-size:11px;letter-spacing:-0.15px">инструмент </span><span class="t" style="left:657.70px;top:28px;font-size:11px;letter-spacing:0.00px">с </span><span class="t" style="left:665.70px;top:28px;font-size:11px;letter-spacing:-0.47px">двойным </span><span class="t" style="left:713.20px;top:28px;font-size:11px;letter-spacing:-0.11px">щелчком </span><span class="t" style="left:762.20px;top:28px;font-size:11px;letter-spacing:-0.16px">выбира... </span></div>
<svg class="abs" style="left:812px;top:2px" width="24" height="42" viewBox="812 695 24 42"><defs><linearGradient id="sg" x1="0" y1="0" x2="1" y2="1"><stop offset="0" stop-color="#fff"/><stop offset=".5" stop-color="#cfceea"/><stop offset="1" stop-color="#8f8dc4"/></linearGradient></defs><path d="M815 705.600L820.800 698.800L830.600 704.700L821 711.800Z" fill="url(#sg)" stroke="#2a2a55" stroke-linejoin="round"/><path d="M826 699.500L831 705.200" stroke="#2a2a55" stroke-width="1.800"/><path d="M819 700.500c-.5-2.500 2-4 3.500-2.500 1 1 1.500 2.500 1.200 5.500" fill="none" stroke="#2a2a55"/><path d="M815.500 706.500l5.500 5.800" stroke="#8f8dc4" stroke-width="1.200"/><path d="M823.500 716.800c-3 2.500-5 5.500-4.500 8.500l1.200 4h6.600l1.200-4c.5-3-1.500-6-4.500-8.500z" fill="url(#sg)" stroke="#2a2a55" stroke-linejoin="round"/><path d="M823.500 718v7.500" stroke="#2a2a55"/><path d="M818.800 729.600h9.400" stroke="#2a2a55" stroke-width="1.300"/><path d="M820.300 730.500h6.400v3h-6.400z" fill="#a9a7d8" stroke="#2a2a55" stroke-width=".8"/></svg>
<svg class="abs" style="left:983px;top:4px" width="30" height="15" viewBox="0 0 30 15"><rect width="30" height="15" fill="#fff"/><path d="M5 2L25 13M25 2L5 13" stroke="#000" stroke-width="1.200" fill="none"/></svg>
<div class="abs" style="left:983px;top:25px;width:30px;height:15px;background:#2b2a29"></div>
</div>
<div id="taskbar" class="abs">
<div class="abs" style="left:0;top:0;width:97px;height:30px;border-radius:0 12px 12px 0/0 15px 15px 0;background:linear-gradient(#3a8f3a 0,#63b963 2px,#45a345 5px,#3d9c3d 12px,#3c9a3c 20px,#358e35 26px,#2b7a2b 30px);box-shadow:inset -3px 0 4px -1px #246a24,2px 0 3px #163f8f"></div>
<svg class="abs" style="left:10px;top:5px" width="21" height="21" viewBox="0 0 18 18"><path d="M2.500 3.500c2-1.200 4-1.200 6 0l-1.300 5.200c-2-1.200-4-1.200-6 0z" fill="#e8562a"/><path d="M10 4.200c2 1.200 4 1.200 6 0l-1.300 5.200c-2 1.200-4 1.200-6 0z" fill="#6fc043"/><path d="M1 10.200c2-1.200 4-1.200 6 0l-1.300 5.200c-2-1.200-4-1.200-6 0z" fill="#3f7ee8"/><path d="M8.400 10.800c2 1.200 4 1.200 6 0l-1.300 5.200c-2 1.200-4 1.200-6 0z" fill="#f5c52c"/></svg>
<div class="t" id="start" style="left:35px;top:6px;font-size:18px;font-weight:bold;font-style:italic;color:#fff;text-shadow:1px 1px 1px #1d5a1e;letter-spacing:-.9px">пуск</div>
<div class="tbn" style="left:105px;width:158px"><svg class="abs" style="left:10px;top:4px" width="17" height="15" viewBox="0 0 17 15"><path d="M1 3.500c0-1 .5-1.500 1.500-1.500h4l1.500 2h7c1 0 1.500.5 1.500 1.500v7c0 1-.5 1.500-1.500 1.500h-12.500c-1 0-1.500-.5-1.500-1.500z" fill="#f5d66b" stroke="#b58a1c"/><path d="M1.500 6.500h14" stroke="#fff3b8"/></svg><div class="t" id="tb1" style="left:30px;letter-spacing:.17px">Электротехника</div></div>
<div class="tbn" style="left:265.500px;width:158px"><svg class="abs" style="left:9.500px;top:3px" width="17" height="17" viewBox="0 0 17 17"><rect x="3.500" y="1.500" width="11" height="14" fill="#fff" stroke="#8a9bc0"/><path d="M6 5h7M6 7.500h7M6 10h7M6 12.500h5" stroke="#9fb0d4"/><rect x="1" y="4" width="8" height="8" fill="#2b5fb8"/><path d="M2.200 5.800l1.300 4.600 1.500-3.600 1.500 3.600 1.300-4.600" stroke="#fff" fill="none" stroke-width="1"/></svg><div class="t" id="tb2" style="left:28.500px;letter-spacing:.18px">Асинхронный двига...</div></div>
<div class="tbn act" style="left:426px;width:159px"><svg class="abs" style="left:10px;top:3px" width="17" height="17" viewBox="0 0 17 17"><circle cx="8.500" cy="8.500" r="8" fill="url(#cg)"/><path d="M4 12.500 L5 7.500 L9 2.500 L10.500 3.500 L11.500 2.800 L13 4 L12.500 5.200 L13.800 6.200 L9.500 11 Z" fill="#fff"/><circle cx="4.600" cy="12.300" r="1.100" fill="#111"/></svg><div class="t" id="tb3" style="left:29.500px;letter-spacing:-.38px">CorelDRAW </div><div class="t" id="tb3b" style="left:88.500px;letter-spacing:.26px">X3 - [D:\...</div></div>
<div class="abs" style="left:932px;top:7px;width:16px;height:16px;background:#3a66c8"></div><div class="t" id="ru" style="left:933px;top:10px;font-size:11px;color:#fff;letter-spacing:-.4px">RU</div>
<div class="abs" style="left:968px;top:0;width:56px;height:30px;background:linear-gradient(#1290e8 0,#3bb1f5 2px,#16a0ef 5px,#0f96e8 14px,#0d8ee0 24px,#0b7acc 30px);box-shadow:inset 2px 0 2px -1px #0a5fb0,-1px 0 0 #123c9a"></div>
<div class="abs" style="left:958px;top:6px;width:18px;height:18px;border-radius:9px;background:radial-gradient(circle at 40% 35%,#6ab8ff 0,#2a86f0 55%,#1a62d0 100%);box-shadow:0 0 0 1px #b9dcff,1px 1px 2px #0a3a90"><svg class="abs" style="left:4px;top:4px" width="9" height="10" viewBox="0 0 9 10"><path d="M6 1.500L2.500 5L6 8.500" fill="none" stroke="#fff" stroke-width="2.200"/></svg></div>
<div class="t" id="clock" style="left:983px;top:10px;font-size:11px;color:#fff">12:27</div>
</div>
</body>
</html>
